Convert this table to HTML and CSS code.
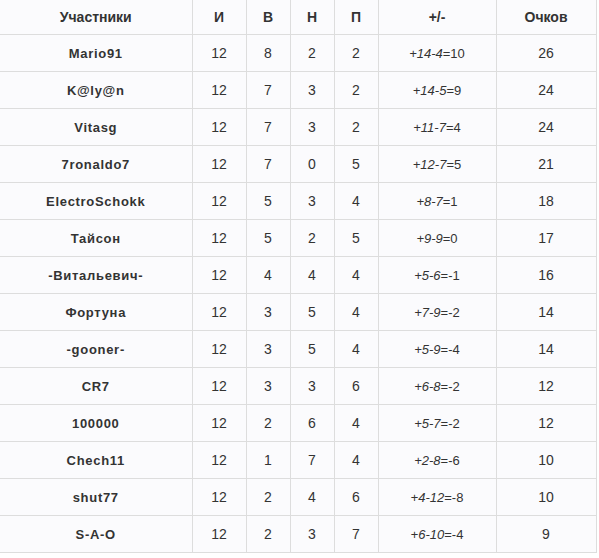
FILE: index.html
```html
<!DOCTYPE html>
<html>
<head>
<meta charset="utf-8">
<link rel="stylesheet" href="styles.css">
</head>
<body>
<table class="standings">
  <colgroup>
    <col class="c-name"><col class="c-i"><col class="c-n"><col class="c-n"><col class="c-n"><col class="c-diff"><col class="c-pts">
  </colgroup>
  <thead>
    <tr><th>Участники</th><th>И</th><th>В</th><th>Н</th><th>П</th><th>+/-</th><th>Очков</th></tr>
  </thead>
  <tbody>
    <tr><td class="name">Mario91</td><td>12</td><td>8</td><td>2</td><td>2</td><td class="diff"><i>+14-4</i>=10</td><td>26</td></tr>
    <tr><td class="name">K@ly@n</td><td>12</td><td>7</td><td>3</td><td>2</td><td class="diff"><i>+14-5</i>=9</td><td>24</td></tr>
    <tr><td class="name">Vitasg</td><td>12</td><td>7</td><td>3</td><td>2</td><td class="diff"><i>+11-7</i>=4</td><td>24</td></tr>
    <tr><td class="name">7ronaldo7</td><td>12</td><td>7</td><td>0</td><td>5</td><td class="diff"><i>+12-7</i>=5</td><td>21</td></tr>
    <tr><td class="name">ElectroSchokk</td><td>12</td><td>5</td><td>3</td><td>4</td><td class="diff"><i>+8-7</i>=1</td><td>18</td></tr>
    <tr><td class="name">Тайсон</td><td>12</td><td>5</td><td>2</td><td>5</td><td class="diff"><i>+9-9</i>=0</td><td>17</td></tr>
    <tr><td class="name">-Витальевич-</td><td>12</td><td>4</td><td>4</td><td>4</td><td class="diff"><i>+5-6</i>=-1</td><td>16</td></tr>
    <tr><td class="name">Фортуна</td><td>12</td><td>3</td><td>5</td><td>4</td><td class="diff"><i>+7-9</i>=-2</td><td>14</td></tr>
    <tr><td class="name">-gooner-</td><td>12</td><td>3</td><td>5</td><td>4</td><td class="diff"><i>+5-9</i>=-4</td><td>14</td></tr>
    <tr><td class="name">CR7</td><td>12</td><td>3</td><td>3</td><td>6</td><td class="diff"><i>+6-8</i>=-2</td><td>12</td></tr>
    <tr><td class="name">100000</td><td>12</td><td>2</td><td>6</td><td>4</td><td class="diff"><i>+5-7</i>=-2</td><td>12</td></tr>
    <tr><td class="name">Chech11</td><td>12</td><td>1</td><td>7</td><td>4</td><td class="diff"><i>+2-8</i>=-6</td><td>10</td></tr>
    <tr><td class="name">shut77</td><td>12</td><td>2</td><td>4</td><td>6</td><td class="diff"><i>+4-12</i>=-8</td><td>10</td></tr>
    <tr><td class="name">S-A-O</td><td>12</td><td>2</td><td>3</td><td>7</td><td class="diff"><i>+6-10</i>=-4</td><td>9</td></tr>
  </tbody>
</table>
</body>
</html>
```
FILE: styles.css
```css
html, body {
  margin: 0;
  padding: 0;
  background: #ffffff;
}
body {
  font-family: "Liberation Sans", Arial, sans-serif;
  color: #333333;
}
.standings {
  border-collapse: collapse;
  table-layout: fixed;
  width: 596px;
  background: #fbfbfd;
}
.c-name { width: 192px; }
.c-i { width: 54px; }
.c-n { width: 44px; }
.c-diff { width: 118px; }
.c-pts { width: 100px; }
.standings th,
.standings td {
  padding: 0;
  text-align: center;
  border-right: 1px solid #dddddd;
  border-bottom: 1px solid #dddddd;
  border-left: none;
  border-top: none;
}
.standings th {
  height: 34px;
  font-size: 14px;
  font-weight: bold;
}
.standings td {
  height: 36px;
  font-size: 14px;
}
.standings td.name {
  font-weight: bold;
  font-size: 13px;
  letter-spacing: 0.7px;
}
.standings td.diff {
  font-size: 13px;
}
.standings td.diff i {
  font-style: italic;
}
```
